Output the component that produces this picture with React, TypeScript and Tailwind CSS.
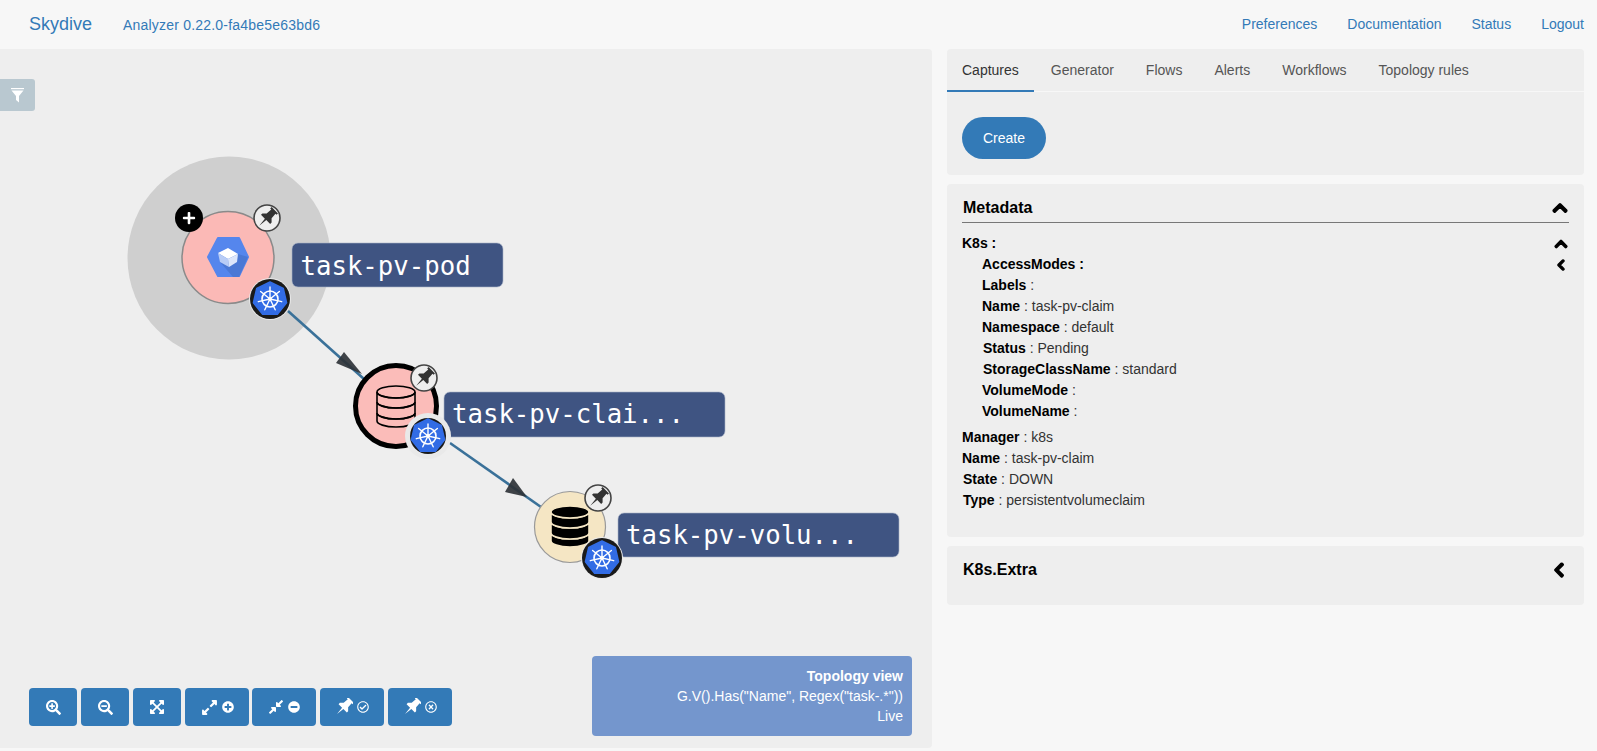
import React from "react";
import {
  FaChevronLeft,
  FaChevronUp,
  FaCompressAlt,
  FaExpandAlt,
  FaExpandArrowsAlt,
  FaMinusCircle,
  FaPlus,
  FaPlusCircle,
  FaRegCheckCircle,
  FaRegTimesCircle,
  FaSearchMinus,
  FaSearchPlus,
} from "react-icons/fa";

const heptagon = (r: number) =>
  [0, 1, 2, 3, 4, 5, 6]
    .map(i => {
      const a = (i * 2 * Math.PI) / 7 - Math.PI / 2;
      return `${(r * Math.cos(a)).toFixed(2)},${(r * Math.sin(a)).toFixed(2)}`;
    })
    .join(" ");

const K8sBadge = ({ cx, cy, halo, ring }: { cx: number; cy: number; halo: number; ring: number }) => (
  <g transform={`translate(${cx} ${cy})`}>
    <circle r={halo} fill="#e9e9e9" />
    <circle r={ring} fill="#1a1a1a" />
    <polygon points={heptagon(17)} fill="#326ce5" stroke="#326ce5" strokeWidth="1.5" strokeLinejoin="round" />
    <circle r="8" fill="none" stroke="#fff" strokeWidth="1.6" />
    <circle r="2" fill="#fff" />
    {[0, 1, 2, 3, 4, 5, 6].map(i => (
      <line
        key={i}
        x1="0"
        y1="0"
        x2="0"
        y2="-12"
        stroke="#fff"
        strokeWidth="1.4"
        strokeLinecap="round"
        transform={`rotate(${(i * 360) / 7})`}
      />
    ))}
  </g>
);

// thumbtack leaning to the right, needle towards bottom left
const pinPath = "M-4.5 -10H4.5V-8H3L3.5 -2L6.5 1V3H1L0 12L-1 3H-6.5V1L-3.5 -2L-3 -8H-4.5z";

const PinBadge = ({ cx, cy }: { cx: number; cy: number }) => (
  <g transform={`translate(${cx} ${cy})`}>
    <circle r="13" fill="#eeeeee" stroke="#444" strokeWidth="1.6" />
    <path d={pinPath} fill="#333" transform="rotate(45) translate(0 -1)" />
  </g>
);

const PinIcon = () => (
  <svg width="18" height="18" viewBox="-10 -10 20 20" fill="#fff">
    <path d={pinPath} transform="rotate(45) translate(0 -1)" />
  </svg>
);

const NodeLabel = ({ x, y, w, h, base, tx, text }: { x: number; y: number; w: number; h: number; base: number; tx: number; text: string }) => (
  <g>
    <rect x={x} y={y} width={w} height={h} rx="6" fill="#3f5482" stroke="#aab4c8" strokeWidth="0.6" />
    <text x={tx} y={base} fill="#fff" fontSize="25.7" className="font-['DejaVu_Sans_Mono',monospace]">
      {text}
    </text>
  </g>
);

const Database = ({ x, y, solid }: { x: number; y: number; solid?: boolean }) => (
  <g transform={`translate(${x} ${y})`} fill={solid ? "#000" : "none"} stroke={solid ? "#f5e6c4" : "#000"} strokeWidth="1.6">
    <path d="M0 27 v8 c0 3 8 6 19 6 s19 -3 19 -6 v-8 c0 3 -8 6 -19 6 s-19 -3 -19 -6z" />
    <path d="M0 16 v11 c0 3 8 6 19 6 s19 -3 19 -6 v-11 c0 3 -8 6 -19 6 s-19 -3 -19 -6z" />
    <path d="M0 6 v10 c0 3 8 6 19 6 s19 -3 19 -6 v-10 c0 3 -8 6 -19 6 s-19 -3 -19 -6z" />
    <ellipse cx="19" cy="6" rx="19" ry="6" />
  </g>
);

const Topology = () => (
  <svg viewBox="0 49 932 699" className="absolute left-0 top-0 w-[932px] h-[699px]">
    <circle cx="229" cy="258" r="101.5" fill="#cfcfcf" />

    <line x1="288" y1="311" x2="364" y2="379" stroke="#3a7199" strokeWidth="2.6" />
    <polygon points="362,374 336,363 344,352" fill="#2f3338" fillOpacity="0.92" />
    <line x1="450" y1="443" x2="541" y2="507" stroke="#3a7199" strokeWidth="2.6" />
    <polygon points="527,497 505,492 513,478" fill="#2f3338" fillOpacity="0.92" />

    <NodeLabel x={292} y={243} w={211} h={44} base={275} tx={300.5} text="task-pv-pod" />
    <NodeLabel x={444} y={392} w={281} h={45} base={423} tx={452} text="task-pv-clai..." />
    <NodeLabel x={618} y={513} w={281} h={44} base={544} tx={626} text="task-pv-volu..." />

    <circle cx="228" cy="257.5" r="46" fill="#fbb9b6" stroke="#8a8a8a" strokeWidth="1.5" />
    <polygon points="208,257 218,238 239,238 248,257 239,276 218,276" fill="#5586ed" stroke="#5586ed" strokeWidth="2" strokeLinejoin="round" />
    <polygon points="238,254 248,257 239,277 233,277 220,262" fill="#4a78d5" />
    <polygon points="218,253 228,248 238,254 228,259" fill="#ffffff" />
    <polygon points="218,253 228,259 229,267 220,262" fill="#b8ccf6" />
    <polygon points="238,254 228,259 229,267 237,262" fill="#dce6fb" />
    <circle cx="189" cy="218" r="14" fill="#000" />
    <FaPlus x={182} y={211} width={14} height={14} color="#fff" />
    <PinBadge cx={267} cy={218} />
    <K8sBadge cx={270} cy={299} halo={21} ring={20} />

    <circle cx="396" cy="406" r="40.5" fill="#fbbcb9" stroke="#000" strokeWidth="5" />
    <Database x={377} y={386} />
    <PinBadge cx={424} cy={378} />
    <K8sBadge cx={428} cy={436} halo={23} ring={18} />

    <circle cx="570" cy="527" r="35.5" fill="#f5e6c4" stroke="#999" strokeWidth="1.2" />
    <Database x={551} y={506} solid />
    <PinBadge cx={598} cy={498} />
    <K8sBadge cx={602} cy={558} halo={21} ring={20} />
  </svg>
);

const toolbar = [
  { w: "w-[48px]", icons: [<FaSearchPlus key="a" size={15} />] },
  { w: "w-[48px]", icons: [<FaSearchMinus key="a" size={15} />] },
  { w: "w-[48px]", icons: [<FaExpandArrowsAlt key="a" size={16} />] },
  { w: "w-[64px]", icons: [<FaExpandAlt key="a" size={17} />, <FaPlusCircle key="b" size={12} />] },
  { w: "w-[64px] -ml-px", icons: [<FaCompressAlt key="a" size={16} />, <FaMinusCircle key="b" size={12} />] },
  { w: "w-[64px]", icons: [<PinIcon key="a" />, <FaRegCheckCircle key="b" size={12} />] },
  { w: "w-[64px]", icons: [<PinIcon key="a" />, <FaRegTimesCircle key="b" size={12} />] },
];

const tabs = ["Captures", "Generator", "Flows", "Alerts", "Workflows", "Topology rules"];

const Row = ({ name, value, nested, strong, shift }: { name: string; value?: string; nested?: boolean; strong?: boolean; shift?: boolean }) => (
  <div className={`h-[21px] leading-[21px] text-[14px] text-[#333] ${nested ? "pl-[20px]" : ""} ${shift ? "ml-px" : ""}`}>
    <span className="font-bold text-black">
      {name}
      {strong ? " :" : ""}
    </span>
    {strong ? "" : " :"}
    {value ? ` ${value}` : ""}
  </div>
);

const App: React.FC = () => {
  return (
    <div className="w-[1597px] h-[751px] bg-[#f7f7f7] overflow-hidden font-['Liberation_Sans',Arial,sans-serif] text-[14px]">
      {/* Navbar */}
      <div className="h-[49px] flex items-center text-[#337ab7]">
        <span className="ml-[29px] text-[18px]">Skydive</span>
        <span className="ml-[31px] mt-[2px] tracking-[0.2px]">Analyzer 0.22.0-fa4be5e63bd6</span>
        <div className="ml-auto mr-[13px] flex gap-[30px]">
          <span>Preferences</span>
          <span>Documentation</span>
          <span>Status</span>
          <span>Logout</span>
        </div>
      </div>

      <div className="flex items-start">
        {/* Topology */}
        <div className="relative w-[932px] h-[699px] bg-[#eeeeee] rounded-r-[4px] shrink-0">
          <Topology />
          <div className="absolute left-0 top-[30px] w-[35px] h-[32px] bg-[#b9c8d0] rounded-r-[3px] flex items-center justify-center">
            <svg width="13" height="15" viewBox="0 0 13 15" fill="#fff">
              <path d="M0 0h13v1.2H0z" />
              <path d="M0.5 2.5h12L8 8v6.5L5 12V8z" />
            </svg>
          </div>
          <div className="absolute left-[29px] top-[639px] flex gap-[4px]">
            {toolbar.map((b, i) => (
              <div key={i} className={`${b.w} h-[38px] bg-[#337ab7] rounded-[4px] flex items-center justify-center gap-[4px] text-white`}>
                {b.icons}
              </div>
            ))}
          </div>
          <div className="absolute left-[592px] top-[607px] w-[320px] h-[80px] bg-[#7496cd] rounded-[4px] pr-[9px] py-[10px] text-right text-white leading-[20px]">
            <div className="font-bold">Topology view</div>
            <div>G.V().Has("Name", Regex("task-.*"))</div>
            <div>Live</div>
          </div>
        </div>

        {/* Right column */}
        <div className="ml-[15px] w-[637px] flex flex-col gap-[9px]">
          <div className="h-[126px] bg-[#eeeeee] rounded-[4px]">
            <div className="h-[43px] flex border-b border-[#f7f7f7]">
              {tabs.map((t, i) => (
                <div
                  key={t}
                  className={`px-[15px] mr-[2px] h-[43px] leading-[42px] ${i === 0 ? "text-[#333] border-b-2 border-[#337ab7]" : "text-[#555]"}`}
                >
                  {t}
                </div>
              ))}
            </div>
            <button className="ml-[15px] mt-[25px] w-[84px] h-[42px] rounded-full bg-[#337ab7] text-white">Create</button>
          </div>

          <div className="h-[353px] bg-[#eeeeee] rounded-[4px] pt-[12px] px-[15px] relative">
            <div className="h-[27px] pb-[3px] border-b border-[#777] flex items-center justify-between text-[16px] font-bold text-black">
              <span className="ml-[1px]">Metadata</span>
              <FaChevronUp size={16} stroke="currentColor" strokeWidth={50} className="mr-[1px]" />
            </div>
            <div className="mt-[10px]">
              <div className="flex justify-between items-center">
                <Row name="K8s" strong />
                <FaChevronUp size={14} stroke="currentColor" strokeWidth={50} className="text-black mr-[1px]" />
              </div>
              <div className="flex justify-between items-center">
                <Row name="AccessModes" nested strong />
                <FaChevronLeft size={12} stroke="currentColor" strokeWidth={60} className="text-black mr-[2px]" />
              </div>
              <Row name="Labels" nested />
              <Row name="Name" value="task-pv-claim" nested />
              <Row name="Namespace" value="default" nested />
              <Row name="Status" value="Pending" nested shift />
              <Row name="StorageClassName" value="standard" nested shift />
              <Row name="VolumeMode" nested />
              <Row name="VolumeName" nested />
              <div className="mt-[5px]">
                <Row name="Manager" value="k8s" />
                <Row name="Name" value="task-pv-claim" />
                <Row name="State" value="DOWN" shift />
                <Row name="Type" value="persistentvolumeclaim" shift />
              </div>
            </div>
          </div>

          <div className="h-[59px] bg-[#eeeeee] rounded-[4px] pt-[12px] px-[15px] flex items-start justify-between text-[16px] font-bold text-black">
            <span className="ml-[1px]">K8s.Extra</span>
            <FaChevronLeft size={16} stroke="currentColor" strokeWidth={50} className="mt-[4px] mr-[2px]" />
          </div>
        </div>
      </div>
    </div>
  );
};

export default App;
